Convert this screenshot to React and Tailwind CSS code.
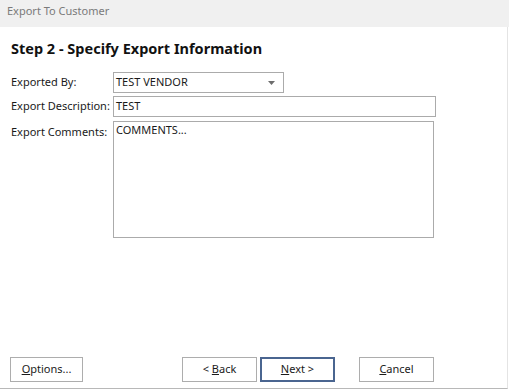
export default function App() {
  const font = { fontFamily: '"Noto Sans", "Open Sans", sans-serif' };
  return (
    <div className="w-[509px] h-[391px] bg-white flex flex-col overflow-hidden text-[#1a1a1a]" style={font}>
      <div className="h-[27px] bg-[#f0f0f0] flex items-start pt-[3px] pl-[7px] shrink-0">
        <span className="text-[11px] leading-[16px] text-[#7a7a7a]">Export To Customer</span>
      </div>
      <div className="flex-1 flex flex-col border-r border-[#e4e4e4] border-b border-b-[#b8b8b8] mb-[2px] mr-[1px]">
        <div className="pl-[11px] pt-[11px] h-[35px]">
          <h1 className="text-[14.5px] font-bold leading-[20px] text-[#111] whitespace-nowrap">Step 2 - Specify Export Information</h1>
        </div>
        <div className="pt-[10px] flex flex-col">
          <div className="flex items-center h-[21px]">
            <span className="w-[113px] shrink-0 pl-[11px] text-[11px] whitespace-nowrap">Exported By:</span>
            <div className="w-[171px] h-[21px] border border-[#ababab] flex items-center justify-between pl-[2px] pr-[8px]">
              <span className="text-[11px]">TEST VENDOR</span>
              <svg width="7" height="4" viewBox="0 0 7 4"><path d="M0 0h7L3.5 4z" fill="#6d6d6d" /></svg>
            </div>
          </div>
          <div className="flex items-center h-[21px] mt-[3px]">
            <span className="w-[113px] shrink-0 pl-[11px] text-[11px] whitespace-nowrap">Export Description:</span>
            <div className="w-[323px] h-[21px] border border-[#ababab] flex items-center pl-[2px]">
              <span className="text-[11px]">TEST</span>
            </div>
          </div>
          <div className="flex items-start mt-[4px]">
            <span className="w-[113px] shrink-0 pl-[11px] text-[11px] pt-[3px] whitespace-nowrap">Export Comments:</span>
            <div className="w-[321px] h-[117px] border border-[#ababab] pl-[2px] pt-[1px]">
              <div className="text-[11px] leading-[14px]">COMMENTS...</div>
            </div>
          </div>
        </div>
        <div className="flex-1" />
        <div className="flex items-center h-[25px] mb-[6px] pl-[10px]">
          <button className="w-[73px] h-[25px] border border-[#adadad] bg-white text-[11px]"><u>O</u>ptions...</button>
          <button className="w-[75px] h-[25px] border border-[#adadad] bg-white text-[11px] ml-[99px]">&lt; <u>B</u>ack</button>
          <button className="w-[75px] h-[25px] border-2 border-[#4a6590] bg-white text-[11px] ml-[3px]"><u>N</u>ext &gt;</button>
          <button className="w-[75px] h-[25px] border border-[#adadad] bg-white text-[11px] ml-[24px]"><u>C</u>ancel</button>
        </div>
      </div>
    </div>
  );
}
